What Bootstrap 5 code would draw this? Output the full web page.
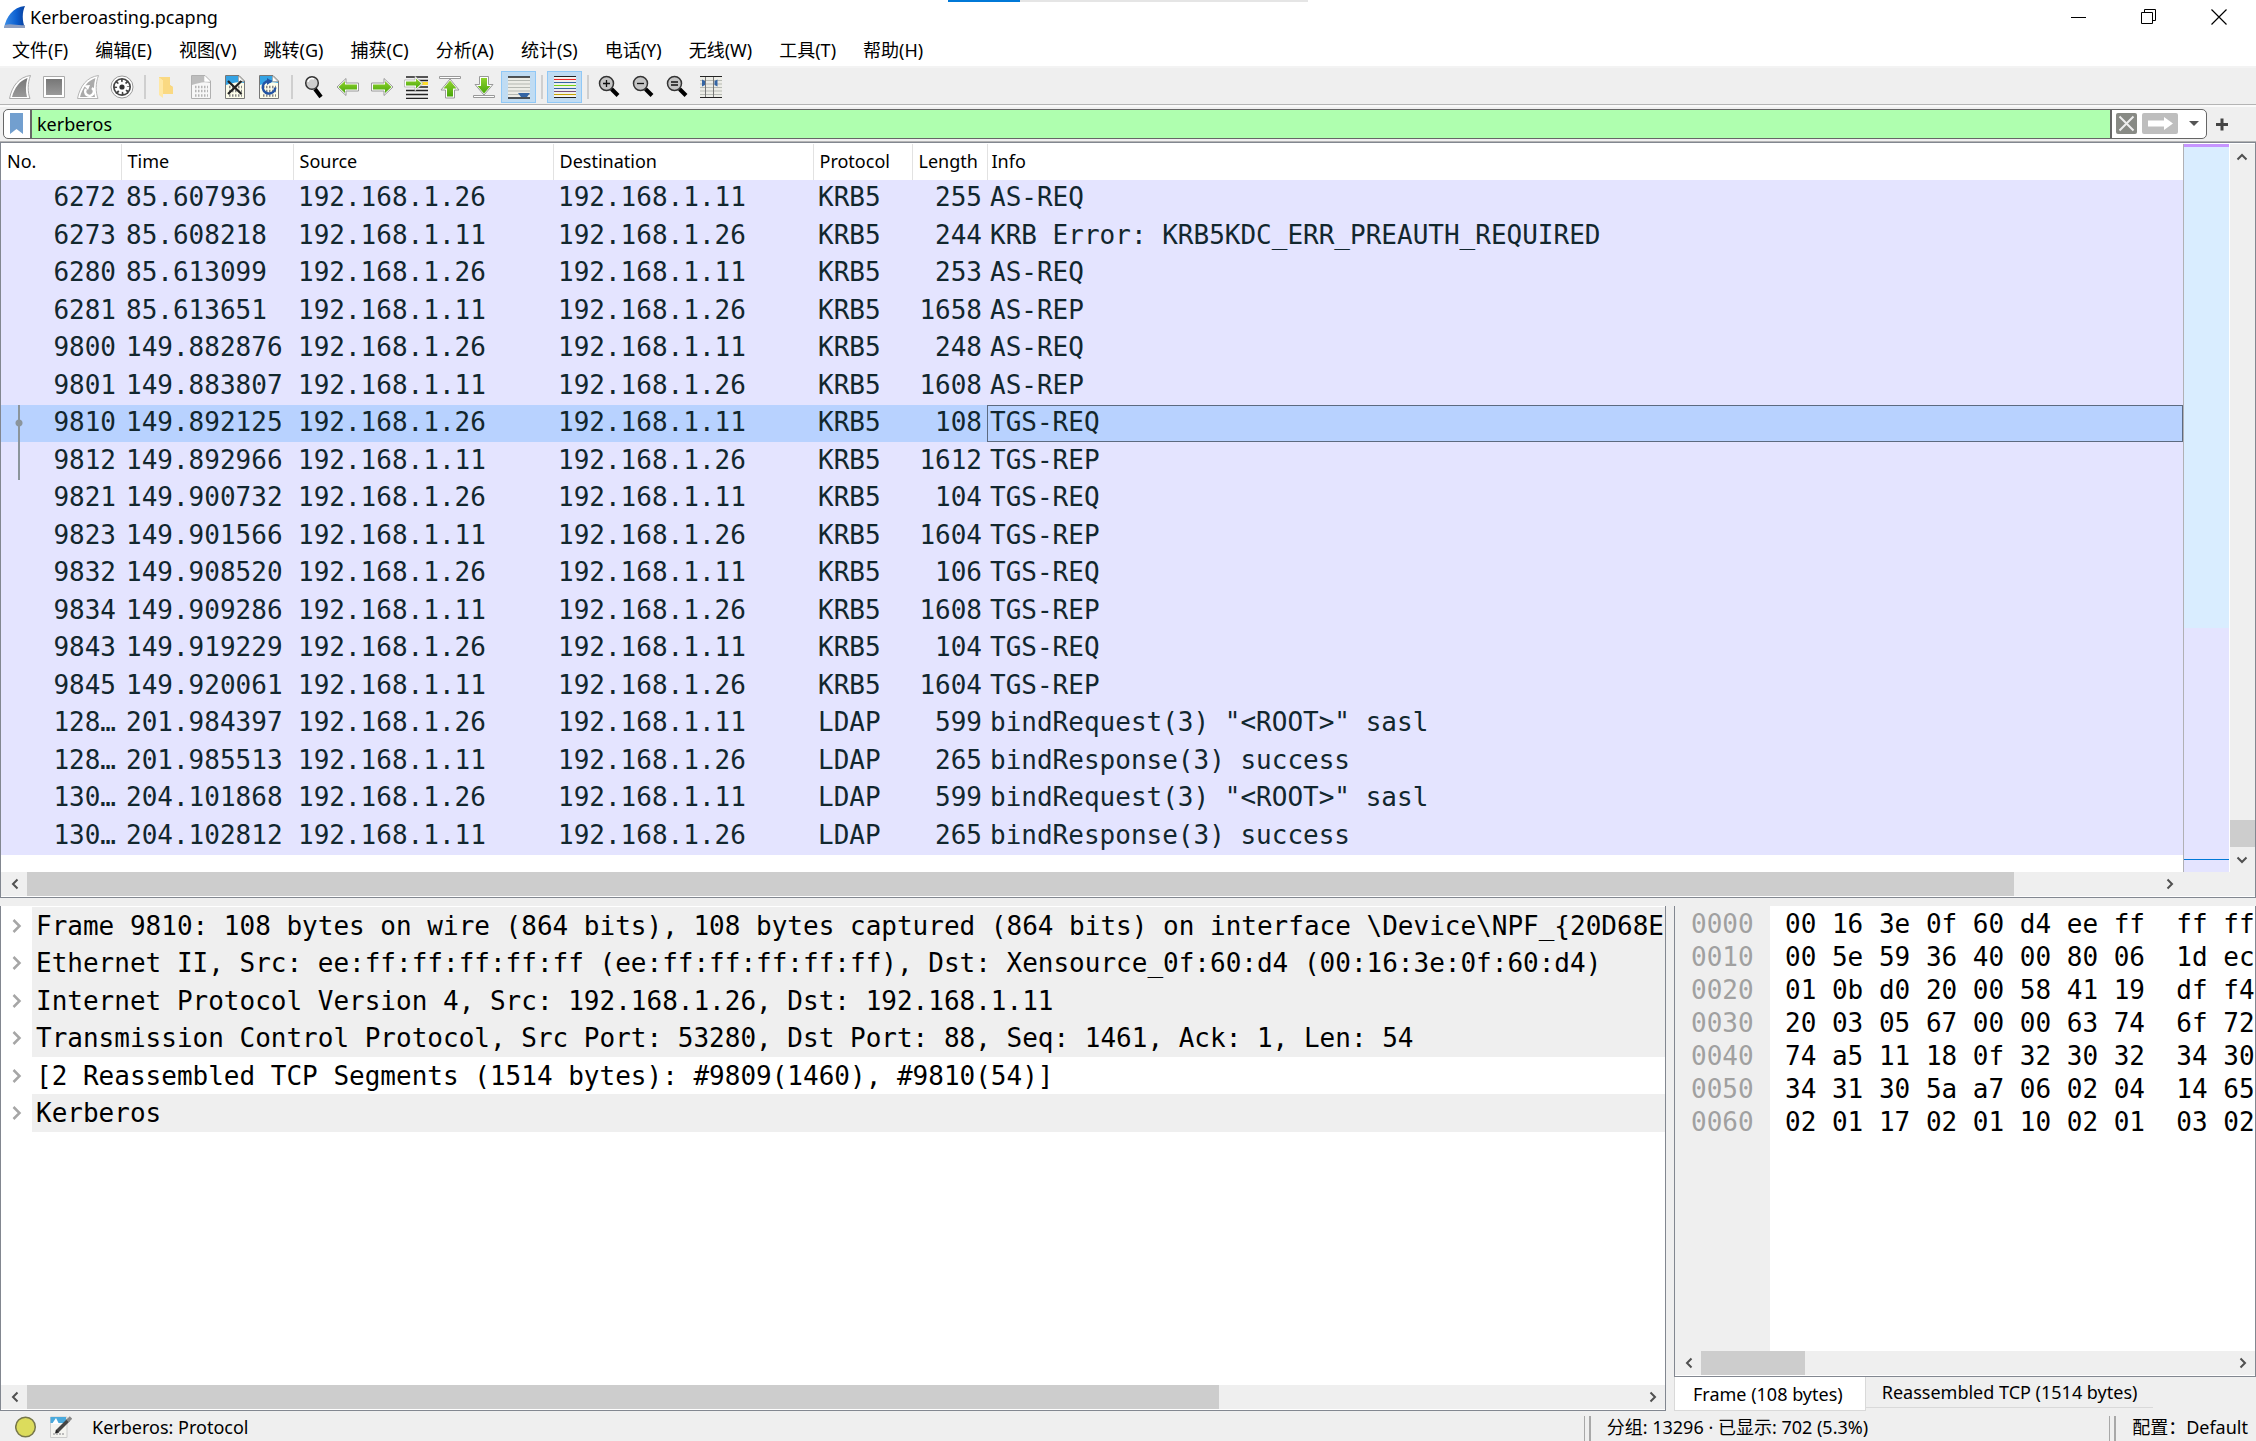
<!DOCTYPE html>
<html lang="zh-CN">
<head>
<meta charset="utf-8">
<meta name="viewport" content="width=device-width, initial-scale=1">
<title>Kerberoasting.pcapng</title>
<link href="https://cdn.jsdelivr.net/npm/bootstrap@5.3.0/dist/css/bootstrap.min.css" rel="stylesheet">
<script src="https://cdn.jsdelivr.net/npm/bootstrap@5.3.0/dist/js/bootstrap.bundle.min.js"></script>
<style>
:root{--chrome:#efefef;--edge:#828790;--thumb:#cdcdcd;--ui:"Noto Sans","Noto Sans CJK SC",sans-serif;--mono:"DejaVu Sans Mono","Noto Sans CJK SC",monospace}
body{font-family:var(--ui);font-size:18px;line-height:24px;color:#000;background:var(--chrome)}
button,input{font:inherit;color:inherit}
.plain{border:0;background:none;padding:0;display:flex;align-items:center;justify-content:center}
.titlebar{height:34px;background:#fff;position:relative;padding-right:2px}
.win-btn{width:70px;height:34px}
.load-strip{position:absolute;top:0;left:42%;width:16%;height:2px;background:#e5e5e5}
.load-strip i{display:block;width:20%;height:2px;background:#0078d7}
.menubar{height:34px;background:#fff;border-bottom:2px solid #f3f3f3;gap:3px}
.menubar a{color:#000;text-decoration:none;padding:0 12px;white-space:nowrap}
.toolbar{height:37px;padding:2px 0 0 3px;border-bottom:1px solid #b4b4b4}
.tool{width:34px;height:32px}
.tool svg{width:24px;height:24px}
.tool-on{width:35px;background:#c0dcf3;border:1px solid #90c8f6}
.tool-sep{width:11px;height:24px;display:flex;justify-content:center}
.tool-sep::before{content:"";width:2px;background:#cfcfcf}
.filterbar{height:37px;padding:2px 0 0 3px;border-bottom:1px solid #b4b4b4;border-top:2px solid #fafafa}
.filterbox{height:30px;border:1px solid #666;border-radius:5px;background:#fff;overflow:hidden}
.filterbox input{border:solid #666;border-width:0 2px;background:#afffaf;padding:0 5px;outline:0;border-radius:0;min-width:0}
.mark-btn{width:26px}
.history-btn{margin:0 6px 0 10px}
.add-btn{width:49px;padding-right:18px;height:30px}
.frame{border:1px solid var(--edge);background:#fff}
.packet-list{padding-top:1px}
.packets{table-layout:fixed;width:100%;border-collapse:collapse;white-space:nowrap}
.packets th{font-weight:400;height:36px;padding:0 0 2px 6px;border-right:1px solid #e2e2e2}
.packets th:last-child{border-right:0;padding-left:4px}
.packets td{font-family:var(--mono);font-size:26px;line-height:34px;height:37px;padding:0 5px 3px;background:#e4e4ff;color:#12272e;overflow:hidden}
.packets tr:nth-child(even) td{height:38px}
.packets .num{text-align:right;padding-left:0}
.packets .info{padding-left:3px}
.packets .picked td{background:#b8d2ff}
.packets .picked .info{outline:1px solid #5c6a80;outline-offset:-1px}
.packets td.link-to{background:linear-gradient(#8b959c,#8b959c) 17px 0/2px 100% no-repeat #e4e4ff}
.packets .picked td.link-from{background:radial-gradient(circle at center,#8b959c 3px,transparent 4px) 13px 13px/10px 10px no-repeat,linear-gradient(#8b959c,#8b959c) 17px 0/2px 100% no-repeat #b8d2ff}
.list-gap{height:17px}
.minimap{width:47px;border-left:1px solid #b0b0b4;border-right:1px solid #fff;background:#e4e4ff;padding-bottom:12px}
.map-top{height:3px;background:#c695ff}
.map-seen{height:481px;background:#d9edff}
.map-here{height:1px;background:#0078d7}
.bar-h{height:24px;background:var(--chrome);margin-bottom:1px;padding-left:1px}
.bar-v{width:25px;background:var(--chrome)}
.bar-h .plain{width:25px;flex:none}
.bar-v .plain{height:25px;width:24px}
.thumb{background:var(--thumb);height:100%}
.thumb-v{background:var(--thumb);height:27px}
.split-h{height:8px}
.panes{min-height:0}
.tree-pane{border-top:0;flex:0 0 1666px;min-width:0}
.side-pane{min-width:0;padding-left:8px}
.tree{padding-top:1px}
.tree li{display:flex;height:37px;white-space:pre}
.tree li:nth-child(even){height:38px}
.tree .plain{width:31px;flex:none}
.tree span{flex:1;min-width:0;overflow:hidden;padding-left:4px;font-family:var(--mono);font-size:26px;line-height:38px}
.tree .shade{background:var(--chrome)}
.hex-frame{border-top:0;min-height:0}
.hex-area{min-height:0;overflow:hidden;padding-top:2px;background:linear-gradient(90deg,var(--chrome) 95px,#fff 95px)}
.hex{font-family:var(--mono);font-size:26px;line-height:33px;white-space:pre}
.hex th{font-weight:400;color:#a0a0a0;width:95px;padding:0 0 0 16px}
.hex td{padding:0 0 0 15px}
.tabs button{border:0;background:none;height:31px;padding:0 16px;border-bottom:1px solid #d9d9d9;line-height:28px;white-space:nowrap}
.tabs .tab-on{background:#fff;height:34px;padding:0 22px 0 18px;border:solid #d9d9d9;border-width:0 1px 1px}
.status{height:30px;padding-top:2px}
.status .rule{width:7px;border:solid #a8a8a8;border-width:0 2px 0 1px;align-self:stretch;margin-top:3px}
.status-icons{padding:0 20px 0 15px;gap:13px}
.status-right{width:29.8%}
</style>
</head>
<body class="vh-100 d-flex flex-column overflow-hidden">

<header class="titlebar d-flex align-items-center flex-shrink-0">
  <svg class="ms-1 flex-shrink-0" width="22" height="24" viewBox="0 0 22 24"><defs><linearGradient id="fin" x1="0" x2="1"><stop offset="0" stop-color="#3d8fe8"/><stop offset=".6" stop-color="#0c5fd0"/><stop offset="1" stop-color="#083f9c"/></linearGradient></defs><path d="M0 23C2 12 9 2 21 1C18 7 18 16 21 23Z" fill="url(#fin)"/><path d="M0 23L1 20C7 18 14 21 21 20V23Z" fill="#8f9fc0"/></svg>
  <span class="ps-1">Kerberoasting.pcapng</span>
  <div class="load-strip"><i></i></div>
  <div class="ms-auto d-flex">
    <button class="plain win-btn" aria-label="最小化"><svg width="16" height="16"><path d="M0 8.500H15" stroke="#000"/></svg></button>
    <button class="plain win-btn" aria-label="还原"><svg width="16" height="16" fill="none" stroke="#000"><path d="M.5 3.500h11v11H.5zM3.500 3.500V.5h11v11h-3"/></svg></button>
    <button class="plain win-btn" aria-label="关闭"><svg width="16" height="16"><path d="M.5.5l15 15M15.500.5l-15 15" stroke="#000" stroke-width="1.200"/></svg></button>
  </div>
</header>

<nav class="menubar d-flex align-items-center flex-shrink-0" aria-label="菜单">
  <a href="#">文件(F)</a><a href="#">编辑(E)</a><a href="#">视图(V)</a><a href="#">跳转(G)</a><a href="#">捕获(C)</a><a href="#">分析(A)</a><a href="#">统计(S)</a><a href="#">电话(Y)</a><a href="#">无线(W)</a><a href="#">工具(T)</a><a href="#">帮助(H)</a>
</nav>

<svg width="0" height="0" class="position-absolute" aria-hidden="true"><defs>
  <linearGradient id="green" x2="0" y2="1"><stop offset="0" stop-color="#8fd22c"/><stop offset="1" stop-color="#4aa70c"/></linearGradient>
  <linearGradient id="gray" x2="0" y2="1"><stop offset="0" stop-color="#777"/><stop offset="1" stop-color="#999"/></linearGradient>
  <symbol id="lens" viewBox="0 0 24 24"><path d="M13.500 14L20 20.500" stroke="#000" stroke-width="4"/><circle cx="8.500" cy="8.500" r="7" fill="#c4c4c4" stroke="#333" stroke-width="1.500"/></symbol>
  <symbol id="sheet" viewBox="0 0 24 24"><path d="M2.500 .5H16L21.500 6V23.500H2.500Z" fill="#fdfdea" stroke="#777"/><path d="M3 1H15.500V6.500H21V8C15 6 9 8 3 10Z" fill="#34a3e4"/><path d="M15.500 1V6.500H21Z" fill="#fff" stroke="#888" stroke-width=".6"/><path d="M6 12H19M6 16H19M6 20.500H19" stroke="#888" stroke-width="2.500" stroke-dasharray="1.500 1.500"/></symbol>
</defs></svg>

<div class="toolbar d-flex align-items-center flex-shrink-0" role="toolbar" aria-label="工具栏">
  <button class="plain tool" aria-label="开始捕获"><svg viewBox="0 0 24 24"><path d="M1.500 23.500C4 11 11 2 22.500 .5C19.500 8 19.500 17 22 23.500Z" fill="#fff" stroke="#aaa"/><path d="M4 22C6.500 12.500 12 5.500 19.500 3C17.500 10 17.500 16 19 22Z" fill="url(#gray)"/></svg></button>
  <button class="plain tool" aria-label="停止捕获"><svg viewBox="0 0 24 24"><path d="M1.500 1.500h21v21h-21z" fill="#fff" stroke="#aaa"/><path d="M4 4h16v16H4z" fill="url(#gray)"/></svg></button>
  <button class="plain tool" aria-label="重新开始"><svg viewBox="0 0 24 24"><path d="M1.500 23.500C4 11 11 2 22.500 .5C19.500 8 19.500 17 22 23.500Z" fill="#fff" stroke="#b5b5b5"/><path d="M4 22C6.500 12.500 12 5.500 19.500 3C17.500 10 17.500 16 19 22Z" fill="#aaa"/><path d="M16 13a4.300 4.300 0 1 1-6 1" fill="none" stroke="#fff" stroke-width="2.500"/><path d="M8 10.500l6-.5-2 5z" fill="#fff"/></svg></button>
  <button class="plain tool" aria-label="捕获选项"><svg viewBox="0 0 24 24"><circle cx="12" cy="12" r="11" fill="#fff" stroke="#999"/><circle cx="12" cy="12" r="9" fill="#444"/><circle cx="12" cy="12" r="5.800" fill="none" stroke="#fff" stroke-width="3" stroke-dasharray="3 1.555"/><circle cx="12" cy="12" r="5" fill="#fff"/><circle cx="12" cy="12" r="2.600" fill="#333"/></svg></button>
  <span class="tool-sep"></span>
  <button class="plain tool" aria-label="打开"><svg viewBox="0 0 24 24"><path d="M4 2h11v8l3 2v7H4z" fill="#f5cf6d"/><path d="M4 2l4 3v18l-4-3z" fill="#ffe8a5"/><path d="M15 2v9l3 1V19H8V5L4 2z" fill="#fad982"/></svg></button>
  <button class="plain tool" aria-label="保存"><svg viewBox="0 0 24 24"><path d="M2.500 .5H16L21.500 6V23.500H2.500Z" fill="#f7f7f7" stroke="#b0b0b0"/><path d="M3 1H15.500V6.500H21V8C15 6 9 8 3 10Z" fill="#bdbdbd"/><path d="M15.500 1V6.500H21Z" fill="#fff"/><path d="M6 12H19M6 16H19M6 20.500H19" stroke="#b5b5b5" stroke-width="2.500" stroke-dasharray="1.500 1.500"/></svg></button>
  <button class="plain tool" aria-label="关闭文件"><svg viewBox="0 0 24 24"><use href="#sheet"/><path d="M5 6L18.500 19M18.500 6L5 19" stroke="#222" stroke-width="2.300"/></svg></button>
  <button class="plain tool" aria-label="重新加载"><svg viewBox="0 0 24 24"><use href="#sheet"/><path d="M14.500 6.500a6.300 6.300 0 1 0 3.800 6" fill="none" stroke="#2455a4" stroke-width="2.500"/><path d="M10 3v7l5-3.500z" fill="#2455a4"/></svg></button>
  <span class="tool-sep"></span>
  <button class="plain tool" aria-label="查找"><svg viewBox="0 0 24 24"><path d="M13 14L19 22" stroke="#000" stroke-width="4"/><circle cx="10" cy="8" r="6.300" fill="#ccc" stroke="#333" stroke-width="1.500"/><path d="M6 7a4 4 0 0 1 6-3" stroke="#fff" stroke-width="1.500" fill="none"/></svg></button>
  <button class="plain tool" aria-label="后退"><svg viewBox="0 0 24 24"><path d="M1 12L10 3.500V8H22.500V16H10V20.500Z" fill="#fff" stroke="#999"/><path d="M2.500 12L9 6V9.500H21V14.500H9V18Z" fill="url(#green)"/></svg></button>
  <button class="plain tool" aria-label="前进"><svg viewBox="0 0 24 24"><path d="M23 12L14 3.500V8H1.500V16H14V20.500Z" fill="#fff" stroke="#999"/><path d="M21.500 12L15 6V9.500H3V14.500H15V18Z" fill="url(#green)"/></svg></button>
  <button class="plain tool" aria-label="转到分组"><svg viewBox="0 0 24 24"><path d="M2 2h22M2 15.500h22M2 19.500h22M2 23.500h22M14 5.500h10M14 12h10" stroke="#222" stroke-width="1.300"/><path d="M16 7h8v3h-8z" fill="#ffdd2c"/><path d="M19 8.500L11 1V5H.5V12H11V16Z" fill="#fff" stroke="#aaa" stroke-width=".7"/><path d="M17.500 8.500L12 3.500V6.500H2V10.500H12V13.500Z" fill="url(#green)"/></svg></button>
  <button class="plain tool" aria-label="首个分组"><svg viewBox="0 0 24 24"><path d="M1.500 1.500h21v2h-21z" fill="#fff" stroke="#999"/><path d="M12 4L21 15H16.500V23H7.500V15H3Z" fill="#fff" stroke="#999"/><path d="M12 5.500L18.500 13.500H15V21.500H9V13.500H5.500Z" fill="url(#green)"/></svg></button>
  <button class="plain tool" aria-label="末个分组"><svg viewBox="0 0 24 24"><path d="M1.500 20.500h21v2h-21z" fill="#fff" stroke="#999"/><path d="M12 20L21 9.500H16.500V1.500H7.500V9.500H3Z" fill="#fff" stroke="#999"/><path d="M12 18.500L18.500 11H15V3H9V11H5.500Z" fill="url(#green)"/></svg></button>
  <button class="plain tool tool-on" aria-label="自动滚动" aria-pressed="true"><svg viewBox="0 0 24 24"><path d="M1 2h22v20H1z" fill="#ecece6"/><path d="M1 5.500h22M1 9h22M1 12.500h22M1 16h22M1 19.500h22" stroke="#b5b8b2"/><path d="M1 2h22M1 23h22" stroke="#222" stroke-width="1.500"/><path d="M11 18h12l-3 4h-6z" fill="#3465a4"/></svg></button>
  <span class="tool-sep"></span>
  <button class="plain tool tool-on" aria-label="着色" aria-pressed="true"><svg viewBox="0 0 24 24"><path d="M1 2h22v20H1z" fill="#f6f6f2"/><g stroke-width="1.100"><path d="M1 1.500h22M1 22.500h22" stroke="#222"/><path d="M1 4.500h22" stroke="#ef2929"/><path d="M1 7.500h22" stroke="#3465a4"/><path d="M1 10.500h22" stroke="#73d216"/><path d="M1 13.500h22" stroke="#3465a4"/><path d="M1 16.500h22" stroke="#75507b"/><path d="M1 19.500h22" stroke="#c4a000"/></g></svg></button>
  <span class="tool-sep"></span>
  <button class="plain tool" aria-label="放大"><svg viewBox="0 0 24 24"><use href="#lens"/><path d="M5 8.500h7M8.500 5v7" stroke="#111" stroke-width="1.300"/></svg></button>
  <button class="plain tool" aria-label="缩小"><svg viewBox="0 0 24 24"><use href="#lens"/><path d="M5 8.500h7" stroke="#111" stroke-width="1.300"/></svg></button>
  <button class="plain tool" aria-label="原始大小"><svg viewBox="0 0 24 24"><use href="#lens"/><path d="M5 7h7M5 10h7" stroke="#111" stroke-width="1.300"/></svg></button>
  <button class="plain tool" aria-label="调整列宽"><svg viewBox="0 0 24 24"><path d="M0 2h22v20H0z" fill="#ecece6"/><path d="M0 5.500h22M0 9h22M0 12.500h22M0 16h22M0 19.500h22" stroke="#b8bbb5"/><path d="M0 1.500h22M0 22.500h22" stroke="#222" stroke-width="1.200"/><path d="M5.500 2v20M13.500 2v20" stroke="#777"/><path d="M2 4.500l3 1.500v4l-3 1.500zM17.500 4.500l-3 1.500v4l3 1.500z" fill="#3465a4"/></svg></button>
</div>

<div class="filterbar d-flex flex-shrink-0">
  <div class="filterbox d-flex flex-grow-1">
    <button class="plain mark-btn flex-shrink-0" aria-label="书签"><svg width="14" height="22"><path d="M0 0h13v21l-6.500-5L0 21z" fill="#729fcf"/></svg></button>
    <input type="text" class="flex-grow-1" value="kerberos" aria-label="显示过滤器">
    <button class="plain ms-1" aria-label="清除"><svg width="22" height="22"><rect width="21" height="21" rx="2" fill="#888a85"/><path d="M3.500 3.500l14 14M17.500 3.500l-14 14" stroke="#eee" stroke-width="2"/></svg></button>
    <button class="plain ms-1" aria-label="应用"><svg width="36" height="22"><rect width="36" height="21" rx="2" fill="#bebebe"/><path d="M6 7.500H22V4L31 10.500L22 17V13.500H6Z" fill="#fff"/></svg></button>
    <button class="plain history-btn" aria-label="历史"><svg width="12" height="8"><path d="M1 1h10L6 6z" fill="#555"/></svg></button>
  </div>
  <button class="plain add-btn" aria-label="添加"><svg width="13" height="13"><path d="M0 6.500h12M6 .5v12" stroke="#444" stroke-width="3"/></svg></button>
</div>

<main class="d-flex flex-column flex-grow-1 panes">
  <section class="frame packet-list flex-shrink-0" aria-label="分组列表">
    <div class="d-flex">
      <div class="flex-grow-1">
        <table class="packets">
          <colgroup><col style="width:120px"><col style="width:172px"><col style="width:260px"><col style="width:260px"><col style="width:99px"><col style="width:75px"><col></colgroup>
          <thead><tr><th>No.</th><th>Time</th><th>Source</th><th>Destination</th><th>Protocol</th><th>Length</th><th>Info</th></tr></thead>
          <tbody>
            <tr><td class="num">6272</td><td>85.607936</td><td>192.168.1.26</td><td>192.168.1.11</td><td>KRB5</td><td class="num">255</td><td class="info">AS-REQ</td></tr>
            <tr><td class="num">6273</td><td>85.608218</td><td>192.168.1.11</td><td>192.168.1.26</td><td>KRB5</td><td class="num">244</td><td class="info">KRB Error: KRB5KDC_ERR_PREAUTH_REQUIRED</td></tr>
            <tr><td class="num">6280</td><td>85.613099</td><td>192.168.1.26</td><td>192.168.1.11</td><td>KRB5</td><td class="num">253</td><td class="info">AS-REQ</td></tr>
            <tr><td class="num">6281</td><td>85.613651</td><td>192.168.1.11</td><td>192.168.1.26</td><td>KRB5</td><td class="num">1658</td><td class="info">AS-REP</td></tr>
            <tr><td class="num">9800</td><td>149.882876</td><td>192.168.1.26</td><td>192.168.1.11</td><td>KRB5</td><td class="num">248</td><td class="info">AS-REQ</td></tr>
            <tr><td class="num">9801</td><td>149.883807</td><td>192.168.1.11</td><td>192.168.1.26</td><td>KRB5</td><td class="num">1608</td><td class="info">AS-REP</td></tr>
            <tr class="picked"><td class="num link-from">9810</td><td>149.892125</td><td>192.168.1.26</td><td>192.168.1.11</td><td>KRB5</td><td class="num">108</td><td class="info">TGS-REQ</td></tr>
            <tr><td class="num link-to">9812</td><td>149.892966</td><td>192.168.1.11</td><td>192.168.1.26</td><td>KRB5</td><td class="num">1612</td><td class="info">TGS-REP</td></tr>
            <tr><td class="num">9821</td><td>149.900732</td><td>192.168.1.26</td><td>192.168.1.11</td><td>KRB5</td><td class="num">104</td><td class="info">TGS-REQ</td></tr>
            <tr><td class="num">9823</td><td>149.901566</td><td>192.168.1.11</td><td>192.168.1.26</td><td>KRB5</td><td class="num">1604</td><td class="info">TGS-REP</td></tr>
            <tr><td class="num">9832</td><td>149.908520</td><td>192.168.1.26</td><td>192.168.1.11</td><td>KRB5</td><td class="num">106</td><td class="info">TGS-REQ</td></tr>
            <tr><td class="num">9834</td><td>149.909286</td><td>192.168.1.11</td><td>192.168.1.26</td><td>KRB5</td><td class="num">1608</td><td class="info">TGS-REP</td></tr>
            <tr><td class="num">9843</td><td>149.919229</td><td>192.168.1.26</td><td>192.168.1.11</td><td>KRB5</td><td class="num">104</td><td class="info">TGS-REQ</td></tr>
            <tr><td class="num">9845</td><td>149.920061</td><td>192.168.1.11</td><td>192.168.1.26</td><td>KRB5</td><td class="num">1604</td><td class="info">TGS-REP</td></tr>
            <tr><td class="num">128…</td><td>201.984397</td><td>192.168.1.26</td><td>192.168.1.11</td><td>LDAP</td><td class="num">599</td><td class="info">bindRequest(3) "&lt;ROOT&gt;" sasl</td></tr>
            <tr><td class="num">128…</td><td>201.985513</td><td>192.168.1.11</td><td>192.168.1.26</td><td>LDAP</td><td class="num">265</td><td class="info">bindResponse(3) success</td></tr>
            <tr><td class="num">130…</td><td>204.101868</td><td>192.168.1.26</td><td>192.168.1.11</td><td>LDAP</td><td class="num">599</td><td class="info">bindRequest(3) "&lt;ROOT&gt;" sasl</td></tr>
            <tr><td class="num">130…</td><td>204.102812</td><td>192.168.1.11</td><td>192.168.1.26</td><td>LDAP</td><td class="num">265</td><td class="info">bindResponse(3) success</td></tr>
          </tbody>
        </table>
        <div class="list-gap"></div>
      </div>
      <div class="minimap d-flex flex-column flex-shrink-0"><div class="map-top"></div><div class="map-seen"></div><div class="map-here mt-auto"></div></div>
      <div class="bar-v d-flex flex-column flex-shrink-0">
        <button class="plain" aria-label="向上"><svg width="12" height="10"><path d="M1.500 7.500L6 3L10.500 7.500" fill="none" stroke="#505050" stroke-width="2"/></svg></button>
        <div class="thumb-v mt-auto"></div>
        <button class="plain" aria-label="向下"><svg width="12" height="10"><path d="M1.500 2.500L6 7L10.500 2.500" fill="none" stroke="#505050" stroke-width="2"/></svg></button>
      </div>
    </div>
    <div class="bar-h d-flex">
      <button class="plain" aria-label="向左"><svg width="10" height="12"><path d="M7.500 1.500L3 6L7.500 10.500" fill="none" stroke="#505050" stroke-width="2"/></svg></button>
      <div class="flex-grow-1"><div class="thumb" style="width:93.300%"></div></div>
      <button class="plain" aria-label="向右"><svg width="10" height="12"><path d="M2.500 1.500L7 6L2.500 10.500" fill="none" stroke="#505050" stroke-width="2"/></svg></button>
      <div class="flex-shrink-0" style="width:73px"></div>
    </div>
  </section>

  <div class="split-h flex-shrink-0"></div>

  <div class="d-flex flex-grow-1 panes">
    <section class="frame tree-pane d-flex flex-column" aria-label="分组详情">
      <ul class="tree list-unstyled mb-0 flex-grow-1 overflow-hidden">
        <li><button class="plain" aria-label="展开"><svg width="12" height="16"><path d="M2.500 2L8.500 8L2.500 14" fill="none" stroke="#a6a6a6" stroke-width="2.500"/></svg></button><span class="shade">Frame 9810: 108 bytes on wire (864 bits), 108 bytes captured (864 bits) on interface \Device\NPF_{20D68E</span></li>
        <li><button class="plain" aria-label="展开"><svg width="12" height="16"><path d="M2.500 2L8.500 8L2.500 14" fill="none" stroke="#a6a6a6" stroke-width="2.500"/></svg></button><span class="shade">Ethernet II, Src: ee:ff:ff:ff:ff:ff (ee:ff:ff:ff:ff:ff), Dst: Xensource_0f:60:d4 (00:16:3e:0f:60:d4)</span></li>
        <li><button class="plain" aria-label="展开"><svg width="12" height="16"><path d="M2.500 2L8.500 8L2.500 14" fill="none" stroke="#a6a6a6" stroke-width="2.500"/></svg></button><span class="shade">Internet Protocol Version 4, Src: 192.168.1.26, Dst: 192.168.1.11</span></li>
        <li><button class="plain" aria-label="展开"><svg width="12" height="16"><path d="M2.500 2L8.500 8L2.500 14" fill="none" stroke="#a6a6a6" stroke-width="2.500"/></svg></button><span class="shade">Transmission Control Protocol, Src Port: 53280, Dst Port: 88, Seq: 1461, Ack: 1, Len: 54</span></li>
        <li><button class="plain" aria-label="展开"><svg width="12" height="16"><path d="M2.500 2L8.500 8L2.500 14" fill="none" stroke="#a6a6a6" stroke-width="2.500"/></svg></button><span>[2 Reassembled TCP Segments (1514 bytes): #9809(1460), #9810(54)]</span></li>
        <li><button class="plain" aria-label="展开"><svg width="12" height="16"><path d="M2.500 2L8.500 8L2.500 14" fill="none" stroke="#a6a6a6" stroke-width="2.500"/></svg></button><span class="shade">Kerberos</span></li>
      </ul>
      <div class="bar-h d-flex flex-shrink-0">
        <button class="plain" aria-label="向左"><svg width="10" height="12"><path d="M7.500 1.500L3 6L7.500 10.500" fill="none" stroke="#505050" stroke-width="2"/></svg></button>
        <div class="flex-grow-1"><div class="thumb" style="width:73.900%"></div></div>
        <button class="plain" aria-label="向右"><svg width="10" height="12"><path d="M2.500 1.500L7 6L2.500 10.500" fill="none" stroke="#505050" stroke-width="2"/></svg></button>
      </div>
    </section>

    <section class="side-pane flex-grow-1 d-flex flex-column" aria-label="分组字节">
      <div class="frame hex-frame flex-grow-1 d-flex flex-column">
        <div class="hex-area flex-grow-1">
          <table class="hex">
            <tr><th>0000</th><td>00 16 3e 0f 60 d4 ee ff  ff ff</td></tr>
            <tr><th>0010</th><td>00 5e 59 36 40 00 80 06  1d ec</td></tr>
            <tr><th>0020</th><td>01 0b d0 20 00 58 41 19  df f4</td></tr>
            <tr><th>0030</th><td>20 03 05 67 00 00 63 74  6f 72</td></tr>
            <tr><th>0040</th><td>74 a5 11 18 0f 32 30 32  34 30</td></tr>
            <tr><th>0050</th><td>34 31 30 5a a7 06 02 04  14 65</td></tr>
            <tr><th>0060</th><td>02 01 17 02 01 10 02 01  03 02</td></tr>
          </table>
        </div>
        <div class="bar-h d-flex flex-shrink-0">
          <button class="plain" aria-label="向左"><svg width="10" height="12"><path d="M7.500 1.500L3 6L7.500 10.500" fill="none" stroke="#505050" stroke-width="2"/></svg></button>
          <div class="flex-grow-1"><div class="thumb" style="width:19.700%"></div></div>
          <button class="plain" aria-label="向右"><svg width="10" height="12"><path d="M2.500 1.500L7 6L2.500 10.500" fill="none" stroke="#505050" stroke-width="2"/></svg></button>
        </div>
      </div>
      <div class="tabs d-flex flex-shrink-0"><button class="tab-on">Frame (108 bytes)</button><button>Reassembled TCP (1514 bytes)</button></div>
    </section>
  </div>
</main>

<footer class="status d-flex align-items-center flex-shrink-0">
  <div class="status-icons d-flex flex-shrink-0">
    <svg width="22" height="22" viewBox="0 0 22 22"><circle cx="10.500" cy="11" r="9.800" fill="#dcdc5c" stroke="#77774a" stroke-width="1.500"/></svg>
    <svg width="22" height="22" viewBox="0 0 22 22"><path d="M.5 1H17V21.500H.5Z" fill="#f4f4f0" stroke="#ccc"/><path d="M.5 1H16V7H.5Z" fill="#4aa9dc"/><path d="M2 8l4-6 3 6z" fill="#fff"/><path d="M3 18h11" stroke="#bbb" stroke-width="2" stroke-dasharray="2 1"/><path d="M7 15.500L18.500 4" stroke="#444" stroke-width="3.500"/><path d="M17.500 5L21 1.500" stroke="#888" stroke-width="3.500"/><path d="M5 17.500l1-4 3 3z" fill="#222"/></svg>
  </div>
  <span class="flex-grow-1">Kerberos: Protocol</span>
  <div class="status-right d-flex align-items-center align-self-stretch">
    <span class="rule"></span><span class="ps-3 flex-grow-1 text-nowrap">分组: 13296 · 已显示: 702 (5.3%)</span>
    <span class="rule"></span><span class="ps-3 pe-2 text-nowrap">配置：Default</span>
  </div>
</footer>
</body>
</html>
